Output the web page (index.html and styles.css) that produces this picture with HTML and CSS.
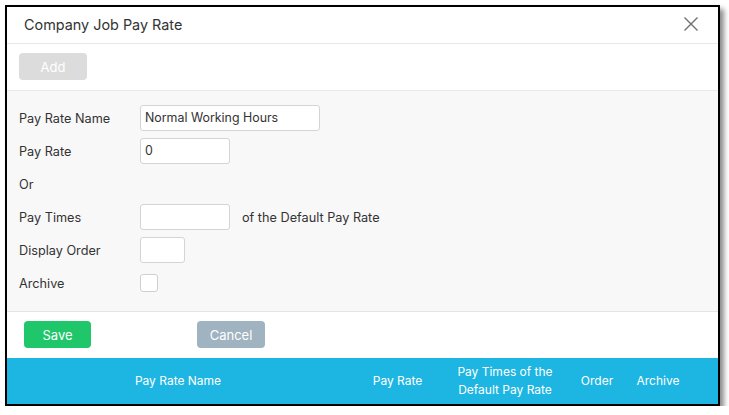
FILE: index.html
```html
<!DOCTYPE html>
<html>
<head>
<meta charset="utf-8">
<link rel="stylesheet" href="styles.css">
</head>
<body>
<div class="modal">
  <div class="modal-header">
    <span class="title">Company Job Pay Rate</span>
    <svg class="close" width="16" height="16" viewBox="0 0 16 16"><path d="M1.5 1.5 L14.5 14.5 M14.5 1.5 L1.5 14.5" stroke="#6f6f6f" stroke-width="1.4" fill="none"/></svg>
  </div>
  <div class="toolbar">
    <button class="btn btn-add">Add</button>
  </div>
  <div class="form">
    <div class="label">Pay Rate Name</div>
    <div class="field"><input class="input w-name" type="text" value="Normal Working Hours"></div>
    <div class="label">Pay Rate</div>
    <div class="field"><input class="input w-mid" type="text" value="0"></div>
    <div class="label">Or</div>
    <div class="field"></div>
    <div class="label">Pay Times</div>
    <div class="field"><input class="input w-mid" type="text"><span class="suffix">of the Default Pay Rate</span></div>
    <div class="label">Display Order</div>
    <div class="field"><input class="input w-small" type="text"></div>
    <div class="label">Archive</div>
    <div class="field"><span class="checkbox"></span></div>
  </div>
  <div class="footer">
    <button class="btn btn-save">Save</button>
    <button class="btn btn-cancel">Cancel</button>
  </div>
  <div class="table-head">
    <div class="th">Pay Rate Name</div>
    <div class="th">Pay Rate</div>
    <div class="th">Pay Times of the<br>Default Pay Rate</div>
    <div class="th">Order</div>
    <div class="th">Archive</div>
    <div class="th"></div>
  </div>
</div>
</body>
</html>
```

FILE: styles.css
```css
* { box-sizing: border-box; }
html, body { margin: 0; padding: 0; background: #ffffff; }
body { font-family: Inter, "Noto Sans", sans-serif; color: #333; }

.modal {
  margin: 5px 0 0 5px;
  width: 715px;
  height: 401px;
  border: 2px solid #000;
  background: #fff;
  box-shadow: 4px 4px 5px rgba(0,0,0,0.45);
  display: flex;
  flex-direction: column;
  overflow: hidden;
}

.modal-header {
  height: 37px;
  border-bottom: 1px solid #e8e8e8;
  display: flex;
  align-items: center;
  justify-content: space-between;
  padding: 0 19px 2px 17px;
}
.title { font-size: 14.4px; color: #333; }
.close { display: block; margin-top: 0; }

.toolbar {
  height: 47px;
  border-bottom: 1px solid #e8e8e8;
  padding: 9px 0 0 12px;
}

.btn {
  border: none;
  border-radius: 4px;
  height: 27px;
  font-family: Inter, "Noto Sans", sans-serif;
  font-size: 13px;
  color: #fff;
  padding: 0;
}
.btn-add { width: 68px; background: #dcdcdc; }

.form {
  height: 221px;
  background: #f8f8f8;
  border-bottom: 1px solid #e5e5e5;
  padding: 10px 0 0 12px;
  display: grid;
  grid-template-columns: 121px 1fr;
  grid-auto-rows: 33px;
  align-content: start;
}
.label {
  font-size: 12.7px;
  color: #333;
  display: flex;
  align-items: center;
  padding-top: 1px;
}
.field { display: flex; align-items: center; }
.input {
  height: 26px;
  border: 1px solid #d4d4d4;
  border-radius: 3px;
  background: #fff;
  font-family: Inter, "Noto Sans", sans-serif;
  font-size: 12.4px;
  color: #333;
  padding: 0 4px;
  outline: none;
}
.w-name { width: 180px; }
.w-mid { width: 90px; }
.w-small { width: 45px; }
.suffix { font-size: 12.7px; margin-left: 12px; color: #333; padding-top: 1px; }
.checkbox {
  display: block;
  width: 18px;
  height: 18px;
  border: 1px solid #cfcfcf;
  border-radius: 3px;
  background: #fff;
}

.footer {
  height: 46px;
  padding: 9px 0 0 17px;
  display: flex;
  align-items: flex-start;
}
.btn-save { width: 67px; background: #1fc66a; }
.btn-cancel { width: 68px; background: #a0b3c0; margin-left: 106px; }

.table-head {
  height: 46px;
  background: #1db5e1;
  display: grid;
  grid-template-columns: 342px 97px 118px 66px 56px 1fr;
  align-items: center;
}
.th {
  color: #fff;
  font-size: 12px;
  text-align: center;
  line-height: 18px;
}
```
